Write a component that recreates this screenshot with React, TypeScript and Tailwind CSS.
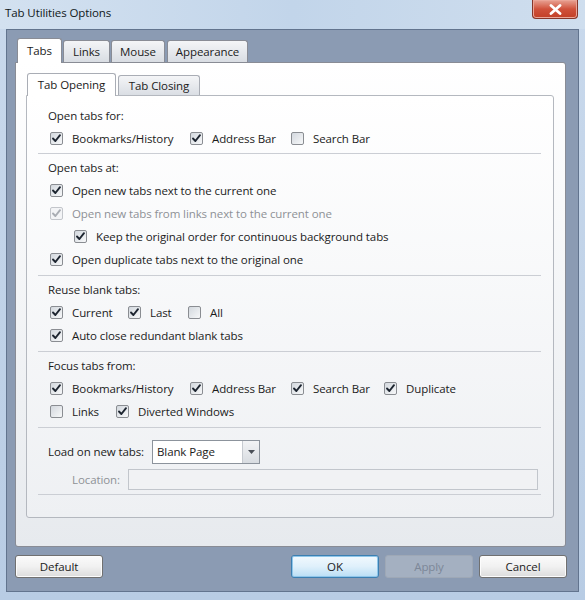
import React from "react";

function Box({ checked = true, disabled = false }: { checked?: boolean; disabled?: boolean }) {
  return (
    <span
      className={`relative flex items-center justify-center w-[13px] h-[13px] shrink-0 rounded-[2px] border ${
        disabled
          ? "border-[#c3c6cb] bg-[#f3f4f6]"
          : "border-[#8a8d92] bg-gradient-to-br from-[#d3d8de] to-[#f7f8f9]"
      }`}
    >
      {checked && (
        <svg width="11" height="11" viewBox="0 0 11 11">
          <path
            d="M2 5.5 L4.4 8 L9 2.2"
            fill="none"
            stroke={disabled ? "#a9adb3" : "#1d2530"}
            strokeWidth="1.9"
            strokeLinecap="round"
            strokeLinejoin="round"
          />
        </svg>
      )}
    </span>
  );
}

function Item({
  label,
  w = "",
  checked = true,
  disabled = false,
}: {
  label: string;
  w?: string;
  checked?: boolean;
  disabled?: boolean;
}) {
  return (
    <div className={`flex items-center ${w}`}>
      <Box checked={checked} disabled={disabled} />
      <span className={`ml-[9px] whitespace-nowrap ${disabled ? "text-[#8e9196]" : ""}`}>{label}</span>
    </div>
  );
}

function Heading({ children }: { children: React.ReactNode }) {
  return <div className="h-[22px] flex items-center pl-[10px]">{children}</div>;
}

function Row({ children, indent = false }: { children: React.ReactNode; indent?: boolean }) {
  return (
    <div className={`h-[23px] flex items-center ${indent ? "pl-[36px]" : "pl-[12px]"}`}>{children}</div>
  );
}

function Sep() {
  return <div className="border-t border-[#cbced4] h-0" />;
}

function Button({ label, kind = "normal" }: { label: string; kind?: "normal" | "default" | "disabled" }) {
  const cls =
    kind === "default"
      ? "border-[#3c7fb1] bg-gradient-to-b from-[#f2f9fe] via-[#dff0fb] to-[#b9def5] shadow-[inset_0_0_0_1px_#8fc6ea]"
      : kind === "disabled"
      ? "border-[#9ea8b6] bg-[#a4b0c1] text-[#7c8798]"
      : "border-[#707070] bg-gradient-to-b from-[#fbfbfb] via-[#f1f1f1] to-[#dcdcdc] shadow-[inset_0_0_0_1px_#fcfcfc]";
  return (
    <div className={`w-[88px] h-[23px] flex items-center justify-center rounded-[3px] border ${cls}`}>
      {label}
    </div>
  );
}

export default function App() {
  return (
    <div className="w-[585px] h-[600px] flex flex-col bg-gradient-to-b from-[#c9d9ec] to-[#b8cce4] text-[11.5px] tracking-[-0.1px] text-[#1b1b1b] font-['Open_Sans','Noto_Sans',sans-serif] overflow-hidden">
      {/* title bar */}
      <div className="h-[29px] flex items-start shrink-0 bg-gradient-to-r from-[#d3e1f0] via-[#c2d5ea] to-[#cfdeee]">
        <span className="ml-[5px] mt-[4px] leading-[18px] text-[#101820]">Tab Utilities Options</span>
        <div className="ml-auto mr-[7px] w-[46px] h-[19px] flex items-center justify-center rounded-b-[4px] border border-t-0 border-[#86362a] bg-gradient-to-b from-[#e7a294] via-[#d0513b] to-[#c23f26] shadow-[inset_0_0_0_1px_#eba597]">
          <svg width="13" height="11" viewBox="0 0 13 11">
            <path d="M2 1.5 L11 9.5 M11 1.5 L2 9.5" stroke="#ffffff" strokeWidth="2.8" strokeLinecap="round" />
          </svg>
        </div>
      </div>

      {/* client area */}
      <div className="mx-[6px] h-[563px] shrink-0 border border-[#62748e] bg-[#8b9bb3] flex flex-col pt-[8px] pl-[8px]">
        {/* outer tabs */}
        <div className="flex items-end h-[24px]">
          <div className="relative z-10 ml-[2px] w-[45px] h-[25px] -mb-px flex items-center justify-center border border-b-0 border-[#898c95] rounded-t-[3px] bg-white">
            Tabs
          </div>
          <div className="ml-px w-[47px] h-[22px] flex items-center justify-center border border-b-0 border-[#898c95] rounded-t-[3px] bg-gradient-to-b from-[#f4f5f7] to-[#d9dde3]">
            Links
          </div>
          <div className="ml-px w-[54px] h-[22px] flex items-center justify-center border border-b-0 border-[#898c95] rounded-t-[3px] bg-gradient-to-b from-[#f4f5f7] to-[#d9dde3]">
            Mouse
          </div>
          <div className="ml-[2px] w-[81px] h-[22px] flex items-center justify-center border border-b-0 border-[#898c95] rounded-t-[3px] bg-gradient-to-b from-[#f4f5f7] to-[#d9dde3]">
            Appearance
          </div>
        </div>

        {/* outer panel */}
        <div className="w-[551px] h-[485px] border border-[#898c95] rounded-b-[3px] rounded-tr-[3px] bg-gradient-to-b from-white to-[#e7eaee] pt-[10px] pl-[10px]">
          {/* inner tabs */}
          <div className="flex items-end h-[22px]">
            <div className="relative z-10 ml-px w-[89px] h-[23px] -mb-px flex items-center justify-center border border-b-0 border-[#a9adb5] rounded-t-[3px] bg-white">
              Tab Opening
            </div>
            <div className="ml-[2px] w-[82px] h-[20px] flex items-center justify-center border border-b-0 border-[#a9adb5] rounded-t-[3px] bg-gradient-to-b from-[#f4f5f7] to-[#dadee4]">
              Tab Closing
            </div>
          </div>

          {/* inner panel */}
          <div className="w-[528px] h-[423px] border border-[#b4b8bf] rounded-b-[3px] rounded-tr-[3px] bg-gradient-to-b from-white to-[#eef0f3] px-[11px] pt-[9px]">
            <div className="pr-px">
              <Heading>Open tabs for:</Heading>
              <Row>
                <Item label="Bookmarks/History" w="w-[140px]" />
                <Item label="Address Bar" w="w-[101px]" />
                <Item label="Search Bar" checked={false} />
              </Row>
              <div className="mt-[3px]" />
              <Sep />

              <div className="mt-[3px]" />
              <Heading>Open tabs at:</Heading>
              <Row>
                <Item label="Open new tabs next to the current one" />
              </Row>
              <Row>
                <Item label="Open new tabs from links next to the current one" disabled />
              </Row>
              <Row indent>
                <Item label="Keep the original order for continuous background tabs" />
              </Row>
              <Row>
                <Item label="Open duplicate tabs next to the original one" />
              </Row>
              <div className="mt-[4px]" />
              <Sep />

              <div className="mt-[3px]" />
              <Heading>Reuse blank tabs:</Heading>
              <Row>
                <Item label="Current" w="w-[78px]" />
                <Item label="Last" w="w-[60px]" />
                <Item label="All" checked={false} />
              </Row>
              <Row>
                <Item label="Auto close redundant blank tabs" />
              </Row>
              <div className="mt-[4px]" />
              <Sep />

              <div className="mt-[3px]" />
              <Heading>Focus tabs from:</Heading>
              <Row>
                <Item label="Bookmarks/History" w="w-[140px]" />
                <Item label="Address Bar" w="w-[101px]" />
                <Item label="Search Bar" w="w-[93px]" />
                <Item label="Duplicate" />
              </Row>
              <Row>
                <Item label="Links" w="w-[66px]" checked={false} />
                <Item label="Diverted Windows" />
              </Row>
              <div className="mt-[4px]" />
              <Sep />

              {/* load on new tabs */}
              <div className="mt-[12px] h-[24px] flex items-center pl-[10px]">
                <span className="w-[104px] whitespace-nowrap">Load on new tabs:</span>
                <div className="w-[108px] h-[24px] flex border border-[#8c939c] bg-white">
                  <span className="flex-1 flex items-center pl-[4px]">Blank Page</span>
                  <div className="w-[17px] flex items-center justify-center border-l border-[#c6cad0] bg-gradient-to-b from-[#f2f3f5] to-[#d8dce1]">
                    <svg width="7" height="4" viewBox="0 0 7 4">
                      <path d="M0 0 H7 L3.5 4 Z" fill="#4a4f57" />
                    </svg>
                  </div>
                </div>
              </div>
              <div className="mt-[5px] h-[21px] flex items-center pl-[10px]">
                <span className="w-[80px] pr-[8px] text-right text-[#8e9196]">Location:</span>
                <div className="w-[410px] h-[21px] border border-[#c2c6cc] bg-[#f1f2f4]" />
              </div>
              <div className="mt-[4px]" />
              <Sep />
            </div>
          </div>
        </div>

        {/* buttons */}
        <div className="mt-[8px] flex items-center pr-[11px]">
          <Button label="Default" />
          <div className="flex-1" />
          <Button label="OK" kind="default" />
          <div className="w-[6px]" />
          <Button label="Apply" kind="disabled" />
          <div className="w-[6px]" />
          <Button label="Cancel" />
        </div>
      </div>
    </div>
  );
}
